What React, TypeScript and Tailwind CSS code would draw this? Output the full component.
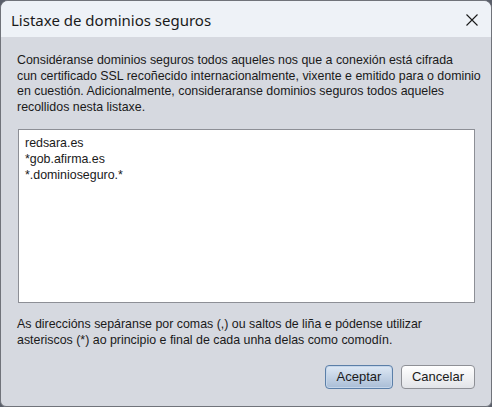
import React from "react";

export default function App() {
  const font = { fontFamily: '"Liberation Sans", Arial, sans-serif' };
  return (
    <div className="w-[492px] h-[407px] bg-[#5a5f6a] overflow-hidden">
      <div
        className="w-[492px] h-[407px] flex flex-col rounded-t-[8px] rounded-b-[6px] border border-[#70737a] overflow-hidden bg-[#d6d9e0]"
        style={font}
      >
        <div className="h-[36px] shrink-0 bg-[#eef2f7] flex items-center justify-between pl-[10px] pr-[13px]">
          <span
            className="text-[15px] text-[#1a1a1a] leading-none mt-[2px]"
            style={{ fontFamily: '"Noto Sans", "Open Sans", sans-serif' }}
          >
            Listaxe de dominios seguros
          </span>
          <svg width="12" height="12" viewBox="0 0 12 12" className="mt-[2px]">
            <path d="M0.5 0.5 L11.5 11.5 M11.5 0.5 L0.5 11.5" stroke="#1a1a1a" strokeWidth="1.1" />
          </svg>
        </div>
        <div className="flex-1 flex flex-col px-[16px] pt-[16px] text-[12.4px] leading-[15.7px] text-[#1a1a1a]">
          <p className="whitespace-nowrap">
            Considéranse dominios seguros todos aqueles nos que a conexión está cifrada
            <br />
            cun certificado SSL recoñecido internacionalmente, vixente e emitido para o dominio
            <br />
            en cuestión. Adicionalmente, consideraranse dominios seguros todos aqueles
            <br />
            recollidos nesta listaxe.
          </p>
          <div className="mt-[13px] ml-[1px] h-[174px] bg-white border border-[#8d8f96] px-[6px] pt-[5px] leading-[16px]">
            <div>redsara.es</div>
            <div>*gob.afirma.es</div>
            <div>*.dominioseguro.*</div>
          </div>
          <p className="mt-[14px] whitespace-nowrap">
            As direccións sepáranse por comas (,) ou saltos de liña e pódense utilizar
            <br />
            asteriscos (*) ao principio e final de cada unha delas como comodín.
          </p>
          <div className="mt-[17px] flex justify-end gap-[8px]">
            <button className="w-[68px] h-[24px] rounded-[4px] border border-[#5b7fa8] bg-gradient-to-b from-[#dfe9f5] to-[#a9bdd6] shadow-[inset_0_0_0_1px_#c5d6ea] text-[13px] text-[#1a1a1a]">
              Aceptar
            </button>
            <button className="w-[74px] h-[24px] rounded-[4px] border border-[#8e9096] bg-gradient-to-b from-[#ffffff] to-[#e2e4e8] text-[13px] text-[#1a1a1a]">
              Cancelar
            </button>
          </div>
        </div>
      </div>
    </div>
  );
}
